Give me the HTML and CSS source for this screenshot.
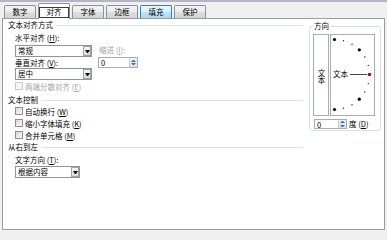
FILE: index.html
```html
<!DOCTYPE html>
<html lang="zh-CN">
<head>
<meta charset="utf-8">
<title>设置单元格格式 - 对齐</title>
<link rel="stylesheet" href="styles.css">
</head>
<body>
<div class="dialog">
  <div class="tabs">
    <div class="tab">数字</div>
    <div class="tab active"><span class="focus">对齐</span></div>
    <div class="tab">字体</div>
    <div class="tab">边框</div>
    <div class="tab hover">填充</div>
    <div class="tab">保护</div>
  </div>
  <div class="panel">
    <div class="left">
      <div class="gt first">文本对齐方式</div>
      <div class="ind lbl-h">水平对齐 (<u>H</u>):</div>
      <div class="ind row row1">
        <div class="select w77"><span class="val">常规</span><span class="drop"><i></i></span></div>
        <span class="indent-lbl dis">缩进 (<u>I</u>):</span>
      </div>
      <div class="ind row row2">
        <span class="lbl-v">垂直对齐 (<u>V</u>):</span>
        <div class="spin w40"><span class="val">0</span><span class="spin-btn"><i class="up"></i><i class="down"></i></span></div>
      </div>
      <div class="ind row row3">
        <div class="select w77"><span class="val">居中</span><span class="drop"><i></i></span></div>
      </div>
      <div class="ind check dis"><span class="box"></span>两端分散对齐 (<u>E</u>)</div>
      <div class="gt ctl">文本控制</div>
      <div class="ind check"><span class="box"></span>自动换行 (<u>W</u>)</div>
      <div class="ind check"><span class="box"></span>缩小字体填充 (<u>K</u>)</div>
      <div class="ind check"><span class="box"></span>合并单元格 (<u>M</u>)</div>
      <div class="gt rtl">从右到左</div>
      <div class="ind lbl-t">文字方向 (<u>T</u>):</div>
      <div class="ind row row3">
        <div class="select w65"><span class="val">根据内容</span><span class="drop"><i></i></span></div>
      </div>
    </div>
    <fieldset class="orient">
      <legend>方向</legend>
      <div class="boxes">
        <div class="vbox"><span class="vtext">文本</span></div>
        <div class="dial">
          <svg class="dial-svg" width="43" height="80" viewBox="0 0 43 80">
            <line x1="19" y1="39.5" x2="36" y2="39.5" stroke="#4a4a4a" stroke-width="1"/>
            <circle cx="3.5" cy="4.5" r="1.6" fill="#000"/>
            <circle cx="12.5" cy="5.7" r="0.7" fill="#222"/>
            <circle cx="21" cy="9.2" r="0.7" fill="#222"/>
            <circle cx="28.3" cy="14.8" r="1.6" fill="#000"/>
            <circle cx="33.8" cy="22" r="0.7" fill="#222"/>
            <circle cx="37.3" cy="30.4" r="0.7" fill="#222"/>
            <circle cx="38.5" cy="39.5" r="1.7" fill="#b00000"/>
            <circle cx="37.3" cy="48.6" r="0.7" fill="#222"/>
            <circle cx="33.8" cy="57" r="0.7" fill="#222"/>
            <circle cx="28.3" cy="64.2" r="1.6" fill="#000"/>
            <circle cx="21" cy="69.8" r="0.7" fill="#222"/>
            <circle cx="12.5" cy="73.3" r="0.7" fill="#222"/>
            <circle cx="3.5" cy="74.5" r="1.6" fill="#000"/>
          </svg>
          <span class="dial-text">文本</span>
        </div>
      </div>
      <div class="deg-row">
        <div class="spin w33"><span class="val">0</span><span class="spin-btn"><i class="up"></i><i class="down"></i></span></div>
        <span class="deg-lbl">度 (<u>D</u>)</span>
      </div>
    </fieldset>
  </div>
</div>
</body>
</html>
```

FILE: styles.css
```css
* { box-sizing: border-box; }
html, body { margin: 0; padding: 0; }
body {
  width: 387px;
  height: 232px;
  overflow: hidden;
  background: #f0f0f0;
  font-family: "Noto Sans CJK SC", "Noto Sans", sans-serif;
  font-size: 7.5px;
  color: #000;
}
u { text-decoration: underline; text-underline-offset: 1px; }

.dialog {
  height: 232px;
  border-top: 2px solid #b4b4c7;
}

/* tabs */
.tabs {
  display: flex;
  align-items: flex-end;
  gap: 2px;
  height: 16px;
  padding-left: 4px;
  position: relative;
  z-index: 1;
}
.tab {
  width: 32px;
  height: 13px;
  border: 1px solid #8d9098;
  border-bottom: 0;
  border-radius: 2px 2px 0 0;
  background: linear-gradient(#f3f3f3, #ececec 50%, #dfdfdf 50%, #d3d3d3);
  display: flex;
  align-items: center;
  justify-content: center;
  line-height: 10px;
}
.tab.hover {
  border-color: #3c7fb1;
  background: linear-gradient(#eaf6fd, #d9f0fc 50%, #bee6fd 50%, #a7d9f5);
}
.tab.active {
  height: 16px;
  margin-bottom: -1px;
  background: #fff;
}
.focus {
  display: flex;
  align-items: center;
  justify-content: center;
  width: 30px;
  height: 11px;
  margin-top: 1px;
  border: 1px solid #3a3a3a;
}

/* panel */
.panel {
  display: flex;
  margin-left: 2px;
  width: 383px;
  height: 212px;
  border: 1px solid #9a9ca3;
  background: #fff;
}
.left {
  width: 303px;
  padding-left: 5px;
  display: flex;
  flex-direction: column;
}
.gt {
  display: flex;
  align-items: center;
  width: 295px;
  height: 10px;
  line-height: 10px;
  white-space: nowrap;
}
.gt::after {
  content: "";
  flex: 1;
  border-top: 1px solid #dde3e8;
  margin-left: 3px;
}
.gt.first { margin-top: 1px; }
.gt.ctl { margin-top: 3px; }
.gt.rtl { height: 12px; line-height: 12px; }

.ind { margin-left: 7px; }
.dis { color: #a3a3a3; }

.lbl-h { height: 13px; padding-top: 3px; line-height: 10px; }
.lbl-t { height: 13px; line-height: 13px; }

.row { display: flex; }
.row1 { height: 14px; align-items: flex-end; }
.row2 { height: 11px; align-items: center; }
.row3 { height: 12px; }

.indent-lbl { margin-left: 7px; line-height: 12px; margin-bottom: 1px; }
.lbl-v { width: 83px; line-height: 11px; }

/* combobox */
.select {
  display: flex;
  align-items: center;
  height: 12px;
  border: 1px solid #8f949b;
  background: #fff;
}
.w77 { width: 77px; }
.w65 { width: 65px; }
.select .val { flex: 1; padding-left: 2px; line-height: 10px; }
.drop {
  width: 8px;
  height: 10px;
  border: 1px solid #a2a2a2;
  background: linear-gradient(#f6f6f6, #dadada);
  display: flex;
  align-items: center;
  justify-content: center;
}
.drop i {
  width: 1px;
  height: 0;
  border-top: 3px solid #111;
  border-left: 2px solid transparent;
  border-right: 2px solid transparent;
  box-sizing: content-box;
}

/* spin */
.spin {
  display: flex;
  align-items: stretch;
  height: 11px;
  border: 1px solid #a5acb5;
  background: #fff;
}
.w40 { width: 40px; }
.w33 { width: 33px; }
.spin .val { flex: 1; padding-left: 2px; line-height: 9px; }
.spin-btn {
  width: 8px;
  display: flex;
  flex-direction: column;
  align-items: center;
  justify-content: space-evenly;
  background: linear-gradient(#eef3f8, #d8e3ee);
  border-left: 1px solid #c4d0dc;
}
.spin-btn i {
  width: 1px;
  height: 0;
  border-left: 2px solid transparent;
  border-right: 2px solid transparent;
  box-sizing: content-box;
}
.spin-btn .up { border-bottom: 2px solid #4c6a92; }
.spin-btn .down { border-top: 2px solid #4c6a92; }

/* checkboxes */
.check {
  display: flex;
  align-items: center;
  height: 12px;
  white-space: nowrap;
}
.check .box {
  width: 8px;
  height: 8px;
  margin-right: 2px;
  border: 1px solid #8e8f8f;
  background: linear-gradient(135deg, #d9d9d9, #fafafa);
}
.check.dis .box {
  border-color: #c8c8c8;
  background: #f5f5f5;
}

/* orientation */
.orient {
  align-self: flex-start;
  margin: 3px 0 0 3px;
  width: 72px;
  padding: 4px 5px 1px 3px;
  border: 1px solid #d5dfe5;
  border-radius: 3px;
  min-width: 0;
}
.orient legend {
  padding: 0 1px;
  line-height: 8px;
  font-size: 7.5px;
}
.boxes {
  display: flex;
  gap: 1px;
  height: 82px;
}
.vbox {
  width: 16px;
  border: 1px solid #a9acb0;
  display: flex;
  align-items: center;
  justify-content: center;
}
.vtext {
  writing-mode: vertical-rl;
  text-orientation: upright;
  line-height: 8px;
  padding-top: 2px;
}
.dial {
  position: relative;
  width: 45px;
  border: 1px solid #a9acb0;
}
.dial-svg { display: block; }
.dial-text {
  position: absolute;
  left: 2px;
  top: 34px;
  line-height: 10px;
}
.deg-row {
  display: flex;
  align-items: center;
  margin-top: 3px;
  height: 10px;
}
.deg-row .spin { margin-left: 1px; height: 10px; }
.deg-lbl { margin-left: 2px; line-height: 10px; white-space: nowrap; }
```
